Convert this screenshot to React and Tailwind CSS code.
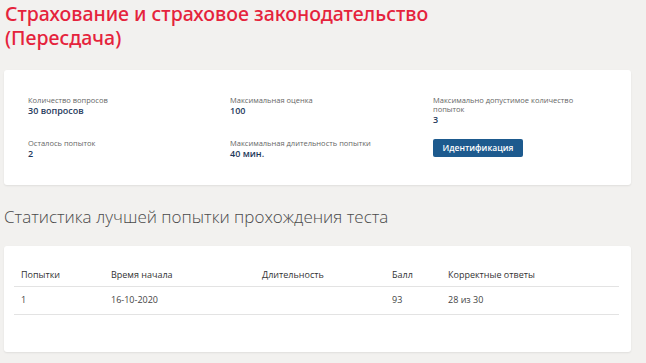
const infoTop = [
  { label: 'Количество вопросов', value: '30 вопросов' },
  { label: 'Максимальная оценка', value: '100' },
  { label: 'Максимально допустимое количество попыток', value: '3' },
]

const attempts = [
  { num: '1', start: '16-10-2020', duration: '', score: '93', correct: '28 из 30' },
]

function InfoItem({ label, value }) {
  return (
    <div>
      <div className="text-[7.5px] leading-[9px] text-[#666]">{label}</div>
      <div className="text-[9px] leading-[11px] font-semibold text-[#1f3a5c]">{value}</div>
    </div>
  )
}

export default function App() {
  return (
    <div className="min-h-[363px] bg-[#f2f1ef] pl-[4px] pr-[15px] pt-[2px] pb-4 font-['Open_Sans',sans-serif]">
      {/* Title */}
      <h1 className="pl-[1px] text-[19.5px] leading-[24px] font-medium text-[#e5233c] font-['Noto_Sans','Open_Sans',sans-serif]">
        Страхование и страховое законодательство
        <br />
        (Пересдача)
      </h1>

      {/* Test info */}
      <div className="mt-[20px] rounded-[3px] bg-white pl-[24px] pt-[26px] pb-[26px] shadow-[0_1px_2px_rgba(0,0,0,0.08)]">
        <div className="grid grid-cols-[202px_203px_150px] gap-y-[14px]">
          {infoTop.map(item => (
            <InfoItem key={item.label} label={item.label} value={item.value} />
          ))}
          <InfoItem label="Осталось попыток" value="2" />
          <InfoItem label="Максимальная длительность попытки" value="40 мин." />
          <div>
            <button className="block h-[18px] w-[90px] rounded-[2px] bg-[#1d5a8e] text-[8.5px] leading-[18px] font-semibold text-white">
              Идентификация
            </button>
          </div>
        </div>
      </div>

      {/* Best attempt */}
      <h2 className="mt-[22px] text-[17px] leading-[20px] font-light text-[#4a4a4a]">
        Статистика лучшей попытки прохождения теста
      </h2>

      <div className="mt-[19px] rounded-[3px] bg-white pl-[10px] pr-[12px] pt-[17px] pb-[37px] shadow-[0_1px_2px_rgba(0,0,0,0.08)]">
        <table className="w-full table-fixed border-collapse text-[9px] text-[#444]">
          <colgroup>
            <col className="w-[90px]" />
            <col className="w-[151px]" />
            <col className="w-[130px]" />
            <col className="w-[56px]" />
            <col />
          </colgroup>
          <thead>
            <tr className="border-b border-[#e3e3e3]">
              <th className="h-[23px] pl-[7px] text-left font-normal text-[#333]">Попытки</th>
              <th className="pl-[7px] text-left font-normal text-[#333]">Время начала</th>
              <th className="pl-[7px] text-left font-normal text-[#333]">Длительность</th>
              <th className="pl-[7px] text-left font-normal text-[#333]">Балл</th>
              <th className="pl-[7px] text-left font-normal text-[#333]">Корректные ответы</th>
            </tr>
          </thead>
          <tbody>
            {attempts.map(a => (
              <tr key={a.num} className="border-b border-[#e3e3e3]">
                <td className="h-[28px] pl-[7px]">{a.num}</td>
                <td className="pl-[7px]">{a.start}</td>
                <td className="pl-[7px]">{a.duration}</td>
                <td className="pl-[7px]">{a.score}</td>
                <td className="pl-[7px]">{a.correct}</td>
              </tr>
            ))}
          </tbody>
        </table>
      </div>
    </div>
  )
}
